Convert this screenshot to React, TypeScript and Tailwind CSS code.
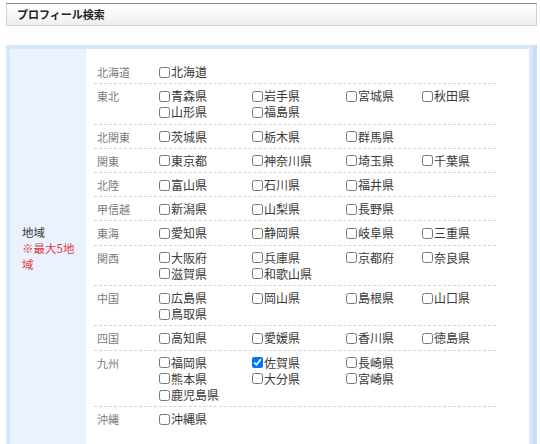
import React from "react";

type Region = { name: string; lines: string[][] };

const regions: Region[] = [
  { name: "北海道", lines: [["北海道"]] },
  { name: "東北", lines: [["青森県", "岩手県", "宮城県", "秋田県"], ["山形県", "福島県"]] },
  { name: "北関東", lines: [["茨城県", "栃木県", "群馬県"]] },
  { name: "関東", lines: [["東京都", "神奈川県", "埼玉県", "千葉県"]] },
  { name: "北陸", lines: [["富山県", "石川県", "福井県"]] },
  { name: "甲信越", lines: [["新潟県", "山梨県", "長野県"]] },
  { name: "東海", lines: [["愛知県", "静岡県", "岐阜県", "三重県"]] },
  { name: "関西", lines: [["大阪府", "兵庫県", "京都府", "奈良県"], ["滋賀県", "和歌山県"]] },
  { name: "中国", lines: [["広島県", "岡山県", "島根県", "山口県"], ["鳥取県"]] },
  { name: "四国", lines: [["高知県", "愛媛県", "香川県", "徳島県"]] },
  { name: "九州", lines: [["福岡県", "佐賀県", "長崎県"], ["熊本県", "大分県", "宮崎県"], ["鹿児島県"]] },
  { name: "沖縄", lines: [["沖縄県"]] },
];

const checked = new Set(["佐賀県"]);

function Pref({ label }: { label: string }) {
  return (
    <label className="flex items-center h-[16.2px] text-[12px] text-[#3a3a3a] whitespace-nowrap">
      <input
        type="checkbox"
        defaultChecked={checked.has(label)}
        className="m-0 w-[11px] h-[11px] shrink-0"
      />
      <span className="ml-[1px]">{label}</span>
    </label>
  );
}

export default function App() {
  return (
    <div
      className="w-[540px] min-h-[444px] bg-white pt-[3px] overflow-hidden"
      style={{ fontFamily: '"Noto Sans CJK JP", "Noto Sans", sans-serif' }}
    >
      <div className="ml-[6px] w-[531px] h-[23px] border border-[#cfcfcf] border-t-[#8a8a8a] bg-gradient-to-b from-white to-[#efefef] flex items-center pl-[10px]">
        <span className="text-[11px] font-bold text-[#222] leading-none">プロフィール検索</span>
      </div>

      <div className="mt-[19px] ml-[6px] w-[531px] border-r-4 border-[#c6dcf4]">
        <div className="flex border-4 border-[#d6e7f9]">
          <div className="w-[76px] shrink-0 bg-[#eaf3fd] flex items-center pl-[12px]">
            <div className="w-[60px] text-[11.5px] leading-[16px]">
              <span className="text-[#333]">地域</span>
              <br />
              <span className="text-[#e0383e]">※最大5地域</span>
            </div>
          </div>
          <div className="flex-1 bg-white pl-[8px] pt-[11px] pb-[17px]">
            <div className="w-[402px]">
              {regions.map((r, i) => (
                <div
                  key={r.name}
                  className={
                    "flex pt-[4px] pb-[3px] " +
                    (i < regions.length - 1 ? "border-b border-dashed border-[#d4d4d4]" : "")
                  }
                >
                  <div className="w-[61px] shrink-0 pl-[3px] text-[11px] leading-[16.2px] text-[#7a7a7a]">
                    {r.name}
                  </div>
                  <div className="flex-1 pl-[4px]">
                    {r.lines.map((line, li) => (
                      <div key={li} className="grid grid-cols-[93px_94px_76px_1fr]">
                        {line.map((p) => (
                          <Pref key={p} label={p} />
                        ))}
                      </div>
                    ))}
                  </div>
                </div>
              ))}
            </div>
          </div>
        </div>
      </div>
    </div>
  );
}
